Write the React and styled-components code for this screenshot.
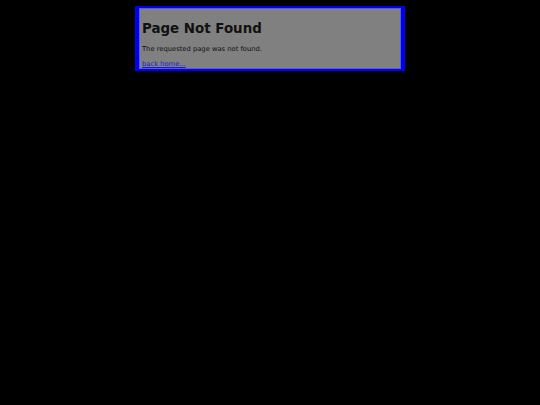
import React from 'react';
import styled, { createGlobalStyle } from 'styled-components';

const GlobalStyle = createGlobalStyle`
body{
    margin: 0;
    background-color: #000;
    font-family: "DejaVu Sans", Verdana, sans-serif;
}
`

const NotFoundBox = styled.div`
width: 270px;
box-sizing: border-box;
margin: 6px auto 0;
padding: 1px 3px 1px;
background-color: #808080;
border-style: solid;
border-color: #0000f0;
border-width: 2px 4px;
box-shadow: inset 0 0 0 1px #5a5ae0;
color: #111;

.title{
    font-size: 13.4px;
    font-weight: bold;
    margin: 11.5px 0 9.5px;
}
.para{
    font-size: 6.75px;
    margin: 0 0 6.7px;
}
.back{
    display: block;
    font-size: 6.75px;
    color: #1a1ad0;
    text-decoration: underline;
}
`

const App = () => {
    return <>
        <GlobalStyle />
        <NotFoundBox>
            <h1 className="title">Page Not Found</h1>
            <p className="para">The requested page was not found.</p>
            <a className="back" href="/">back home...</a>
        </NotFoundBox>
    </>;
};

export default App;
